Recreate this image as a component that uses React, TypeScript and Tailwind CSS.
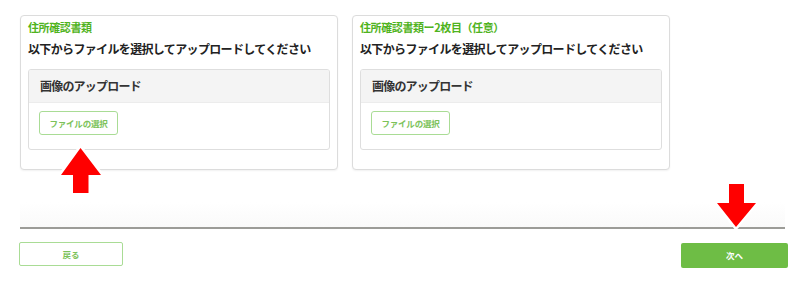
const FONT = "font-['Noto_Sans_CJK_JP','Noto_Sans',sans-serif]";

// Two upload cards, the same layout, only the title differs.
const DOCS = [
  { title: "住所確認書類" },
  { title: "住所確認書類ー2枚目（任意）" },
];

function UploadCard({ title }: { title: string }) {
  return (
    <div className="w-[318px] h-[155px] rounded-[4px] border border-[#dcdcdc] bg-white px-[7px] pt-[4px] shadow-[0_1px_2px_rgba(0,0,0,0.06)]">
      <div className="text-[11px] font-bold leading-[14px] tracking-[-0.4px] text-[#4fb320]">{title}</div>
      <div className="mt-[7px] text-[12px] font-bold leading-[16px] tracking-[-0.65px] text-[#222]">
        以下からファイルを選択してアップロードしてください
      </div>
      <div className="mt-[12px] h-[81px] rounded-[3px] border border-[#dedede] overflow-hidden">
        <div className="h-[33px] bg-[#f4f4f4] border-b border-[#ececec] flex items-center pl-[11px] text-[12px] font-bold tracking-[-0.8px] text-[#333]">
          画像のアップロード
        </div>
        <div className="pl-[10px] pt-[8px]">
          <button className="block w-[79px] h-[24px] rounded-[3px] border border-[#a9dc95] bg-white text-[8.5px] font-bold text-[#7cc25a] tracking-[-0.2px]">
            ファイルの選択
          </button>
        </div>
      </div>
    </div>
  );
}

export default function App() {
  return (
    <div className={`${FONT} relative w-[800px] h-[289px] bg-white overflow-hidden`}>
      {/* card row */}
      <div className="flex gap-[14px] pl-[20px] pt-[15px]">
        {DOCS.map((d) => (
          <UploadCard key={d.title} title={d.title} />
        ))}
      </div>

      {/* divider with faint shadow above */}
      <div className="mt-[32px] ml-[20px] w-[765px] h-[25px] bg-gradient-to-b from-white to-[#fafafa]" />
      <div className="ml-[20px] w-[765px] h-[2px] bg-[#9c9c98]" />

      {/* footer buttons */}
      <div className="flex justify-between pl-[19px] pr-[12px] mt-[13px]">
        <button className="w-[104px] h-[24px] rounded-[2px] border border-[#a9dc95] bg-white text-[8.5px] font-bold text-[#7cc25a]">
          戻る
        </button>
        <button className="mt-[1px] w-[107px] h-[25px] rounded-[2px] bg-[#6ebd45] text-[8.5px] font-bold text-white">
          次へ
        </button>
      </div>

      {/* red annotation arrows */}
      <svg className="absolute left-[55px] top-[142px]" width="52" height="56" viewBox="0 0 52 56">
        <path
          d="M25.5 6 L46 33 L33.5 33 L33.5 51 L18 51 L18 33 L6 33 Z"
          fill="#ff0000"
          stroke="#ffffff"
          strokeWidth="5"
          strokeLinejoin="round"
          paintOrder="stroke"
        />
      </svg>
      <svg className="absolute left-[711px] top-[179px]" width="52" height="54" viewBox="0 0 52 54">
        <path
          d="M18 5 L33 5 L33 24 L45 24 L25 48 L6 24 L18 24 Z"
          fill="#ff0000"
          stroke="#ffffff"
          strokeWidth="5"
          strokeLinejoin="round"
          paintOrder="stroke"
        />
      </svg>
    </div>
  );
}
